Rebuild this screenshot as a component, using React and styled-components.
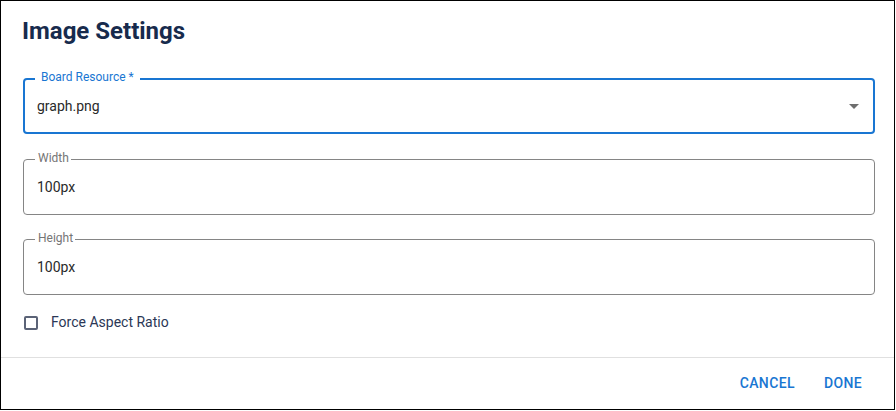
import React from "react";
import styled, { createGlobalStyle } from "styled-components";

const Global = createGlobalStyle`
  html, body { margin: 0; padding: 0; background: #fff; }
  body { font-family: Roboto, "Liberation Sans", Arial, sans-serif; }
  * { box-sizing: border-box; }
`;

const Dialog = styled.div`
  width: 895px;
  height: 410px;
  border: 1px solid #000;
  background: #fff;
  display: flex;
  flex-direction: column;
`;

const Content = styled.div`
  flex: 1;
  padding: 14px 19px 0 22px;
  display: flex;
  flex-direction: column;
`;

const Title = styled.h2`
  margin: 0 0 0 -1px;
  font-size: 24px;
  line-height: 32px;
  font-weight: 700;
  color: #172b4d;
`;

const Field = styled.div`
  position: relative;
  height: 56px;
  margin-top: ${(p) => p.$mt}px;
  border: ${(p) => (p.$focused ? "2px solid #1976d2" : "1px solid #858585")};
  border-radius: 4px;
  display: flex;
  align-items: center;
  padding-left: ${(p) => (p.$focused ? 12 : 13)}px;
  padding-right: ${(p) => (p.$focused ? 12 : 13)}px;
`;

const Label = styled.span`
  position: absolute;
  left: ${(p) => (p.$focused ? 10 : 11)}px;
  top: ${(p) => (p.$focused ? -11 : -10)}px;
  padding: ${(p) => (p.$focused ? "0 6px" : "0 2px 0 3px")};
  background: #fff;
  font-size: 12px;
  line-height: 16px;
  color: ${(p) => (p.$focused ? "#1976d2" : "#757575")};
`;

const Value = styled.span`
  flex: 1;
  font-size: 14px;
  color: #2a2a2a;
`;

const Arrow = styled.svg`
  width: 24px;
  height: 24px;
  margin-right: -5px;
  fill: #6e6e6e;
`;

const CheckRow = styled.label`
  margin-top: 15px;
  height: 24px;
  display: flex;
  align-items: center;
`;

const Box = styled.span`
  width: 14px;
  height: 14px;
  margin: 1px 13px 0 1px;
  border: 2px solid #5b6377;
  border-radius: 2px;
`;

const CheckText = styled.span`
  font-size: 14px;
  color: #2b3756;
`;

const Footer = styled.div`
  border-top: 1px solid #e0e0e0;
  padding: 7px 19px 8px 0;
  display: flex;
  justify-content: flex-end;
  gap: 8px;
`;

const Button = styled.button`
  min-width: 64px;
  height: 36px;
  padding: 6px 8px;
  border: none;
  background: transparent;
  font-family: Roboto, "Liberation Sans", Arial, sans-serif;
  font-size: 14px;
  font-weight: 500;
  letter-spacing: 0.4px;
  text-transform: uppercase;
  color: #1976d2;
  cursor: pointer;
`;

export default function App() {
  return (
    <>
      <Global />
      <Dialog>
        <Content>
          <Title>Image Settings</Title>
          <Field $focused $mt={31}>
            <Label $focused>Board Resource *</Label>
            <Value>graph.png</Value>
            <Arrow viewBox="0 0 24 24">
              <path d="M7 10l5 5 5-5z" />
            </Arrow>
          </Field>
          <Field $mt={25}>
            <Label>Width</Label>
            <Value>100px</Value>
          </Field>
          <Field $mt={24}>
            <Label>Height</Label>
            <Value>100px</Value>
          </Field>
          <CheckRow>
            <Box />
            <CheckText>Force Aspect Ratio</CheckText>
          </CheckRow>
        </Content>
        <Footer>
          <Button>Cancel</Button>
          <Button>Done</Button>
        </Footer>
      </Dialog>
    </>
  );
}
